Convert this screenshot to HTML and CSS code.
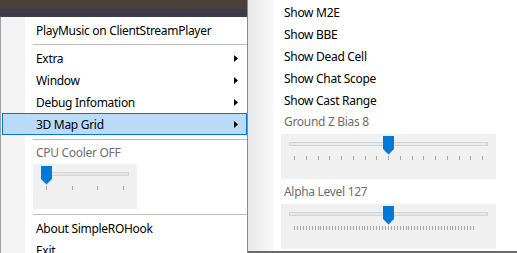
FILE: index.html
```html
<!DOCTYPE html>
<html>
<head>
<meta charset="utf-8">
<link rel="stylesheet" href="styles.css">
</head>
<body>
<div class="screen">
  <div class="main">
    <div class="topband"><div class="band-a"></div><div class="band-b"></div></div>
    <div class="menu">
      <div class="item">PlayMusic on ClientStreamPlayer</div>
      <div class="sep sep-a"></div>
      <div class="item">Extra<svg class="arrow" width="4" height="7" viewBox="0 0 4 7"><path d="M0 0L4 3.5L0 7Z"/></svg></div>
      <div class="item">Window<svg class="arrow" width="4" height="7" viewBox="0 0 4 7"><path d="M0 0L4 3.5L0 7Z"/></svg></div>
      <div class="item">Debug Infomation<svg class="arrow" width="4" height="7" viewBox="0 0 4 7"><path d="M0 0L4 3.5L0 7Z"/></svg></div>
      <div class="item hl">3D Map Grid<svg class="arrow" width="4" height="7" viewBox="0 0 4 7"><path d="M0 0L4 3.5L0 7Z"/></svg></div>
      <div class="sep sep-b"></div>
      <div class="label">CPU Cooler OFF</div>
      <div class="slider small">
        <svg width="104" height="45" viewBox="0 0 104 45">
          <rect x="8.5" y="8.5" width="87" height="3" class="track"/>
          <path class="ticks" d="M13.5 22v4M39.5 22v4M64.5 22v4M90.5 22v4"/>
          <path class="thumb" d="M8 2H19V15L13.5 20.5L8 15Z"/>
        </svg>
      </div>
      <div class="sep sep-c"></div>
      <div class="item">About SimpleROHook</div>
      <div class="item">Exit</div>
    </div>
  </div>
  <div class="sub">
    <div class="sitem">Show M2E</div>
    <div class="sitem">Show BBE</div>
    <div class="sitem">Show Dead Cell</div>
    <div class="sitem">Show Chat Scope</div>
    <div class="sitem">Show Cast Range</div>
    <div class="slabel">Ground Z Bias 8</div>
    <div class="slider wide">
      <svg width="215" height="45" viewBox="0 0 215 45">
        <rect x="8.5" y="8.5" width="198" height="3" class="track"/>
        <path class="ticks" d="M13.5 22v4M25.5 22v4M37.5 22v4M48.5 22v4M60.5 22v4M72.5 22v4M84.5 22v4M95.5 22v4M107.5 22v4M119.5 22v4M131.5 22v4M142.5 22v4M154.5 22v4M166.5 22v4M178.5 22v4M189.5 22v4M201.5 22v4"/>
        <path class="thumb" d="M102 2H113V15L107.5 20.5L102 15Z"/>
      </svg>
    </div>
    <div class="slabel second">Alpha Level 127</div>
    <div class="slider wide">
      <svg width="215" height="45" viewBox="0 0 215 45">
        <rect x="8.5" y="8.5" width="198" height="3" class="track"/>
        <path class="ticks" d="M13.5 22v4m3 -4v4m3 -4v4m3 -4v4m3 -4v4m3 -4v4m3 -4v4m3 -4v4m3 -4v4m2 -4v4m3 -4v4m3 -4v4m3 -4v4m3 -4v4m3 -4v4m3 -4v4m3 -4v4m3 -4v4m3 -4v4m3 -4v4m3 -4v4m3 -4v4m3 -4v4m3 -4v4m2 -4v4m3 -4v4m3 -4v4m3 -4v4m3 -4v4m3 -4v4m3 -4v4m3 -4v4m3 -4v4m3 -4v4m3 -4v4m3 -4v4m3 -4v4m3 -4v4m3 -4v4m2 -4v4m3 -4v4m3 -4v4m3 -4v4m3 -4v4m3 -4v4m3 -4v4m3 -4v4m3 -4v4m3 -4v4m3 -4v4m3 -4v4m3 -4v4m3 -4v4m3 -4v4m2 -4v4m3 -4v4m3 -4v4m3 -4v4m3 -4v4m3 -4v4m3 -4v4m3 -4v4"/>
        <path class="thumb" d="M102 2H113V15L107.5 20.5L102 15Z"/>
      </svg>
    </div>
  </div>
</div>
</body>
</html>
```

FILE: styles.css
```css
html, body {
  margin: 0;
  padding: 0;
  background: #ffffff;
}
body {
  font-family: "Noto Sans", "Open Sans", sans-serif;
  font-size: 12px;
  letter-spacing: -0.3px;
  color: #000000;
}
.screen {
  display: flex;
  width: 517px;
  height: 253px;
  overflow: hidden;
}
.main {
  width: 248px;
  flex: none;
  display: flex;
  flex-direction: column;
  border-right: 1px solid #8c8c8c;
  box-sizing: border-box;
}
.topband {
  flex: none;
}
.band-a {
  height: 9px;
  background: #4b4139;
}
.band-b {
  height: 8px;
  background: #3b3e49;
}
.menu {
  flex: 1;
  border-left: 1px solid #a0a0a0;
  padding-top: 2px;
  background: linear-gradient(to right, #f3f3f3 0, #f3f3f3 24px, #ffffff 24px);
}
.item {
  height: 22px;
  box-sizing: border-box;
  display: flex;
  align-items: center;
  justify-content: space-between;
  padding-left: 35px;
  padding-right: 9px;
  white-space: nowrap;
}
.item.hl {
  margin-left: 1px;
  border: 1px solid #0078d7;
  background: #bbdaf6;
  padding-left: 33px;
  padding-right: 8px;
}
.arrow {
  fill: #000000;
  flex: none;
}
.sep {
  height: 1px;
  background: #bdbdbd;
  margin-left: 32px;
}
.sep-a {
  margin-top: 3px;
  margin-bottom: 2px;
}
.sep-b {
  margin-top: 4px;
  margin-bottom: 2px;
}
.sep-c {
  margin-top: 5px;
  margin-bottom: 2px;
}
.label {
  height: 20px;
  display: flex;
  align-items: center;
  padding-left: 35px;
  color: #6d6d6d;
  margin-bottom: 2px;
}
.slider {
  height: 45px;
  background: #f0f0f0;
  flex: none;
}
.slider svg {
  display: block;
}
.slider.small {
  width: 104px;
  margin-left: 32px;
}
.track {
  fill: #e7e7e7;
  stroke: #d4d4d4;
  stroke-width: 1;
}
.ticks {
  stroke: #a6a6a6;
  stroke-width: 1;
  fill: none;
}
.thumb {
  fill: #0078d7;
}
.sub {
  width: 269px;
  flex: none;
  height: 253px;
  box-sizing: border-box;
  padding-top: 1px;
  border-bottom: 2px solid #6b6b6b;
  background: linear-gradient(to right, #e9e9e9 0, #f7f7f7 25px, #ffffff 25px);
  display: flex;
  flex-direction: column;
}
.sitem {
  height: 22px;
  display: flex;
  align-items: center;
  padding-left: 36px;
  white-space: nowrap;
  flex: none;
}
.slabel {
  height: 20px;
  display: flex;
  align-items: center;
  padding-left: 36px;
  color: #6d6d6d;
  margin-bottom: 3px;
  flex: none;
}
.slabel.second {
  margin-top: 2px;
}
.slider.wide {
  width: 215px;
  margin-left: 33px;
}
```
